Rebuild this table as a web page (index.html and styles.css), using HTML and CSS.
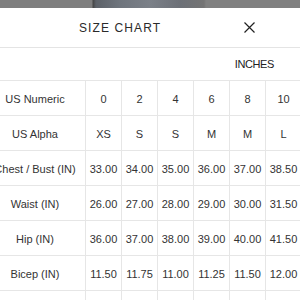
FILE: index.html
```html
<!DOCTYPE html>
<html>
<head>
<meta charset="utf-8">
<link rel="stylesheet" href="styles.css">
</head>
<body>
<div class="photo"></div>
<div class="modal">
  <div class="header">
    <div class="title">SIZE CHART</div>
    <svg class="close" width="11" height="11" viewBox="0 0 11 11"><path d="M0.5 0.5 L10.5 10.5 M10.5 0.5 L0.5 10.5" stroke="#222" stroke-width="1.2" fill="none"/></svg>
  </div>
  <div class="units">INCHES</div>
  <div class="chart">
    <div class="cell label">US Numeric</div><div class="cell">0</div><div class="cell">2</div><div class="cell">4</div><div class="cell">6</div><div class="cell">8</div><div class="cell">10</div>
    <div class="cell label">US Alpha</div><div class="cell">XS</div><div class="cell">S</div><div class="cell">S</div><div class="cell">M</div><div class="cell">M</div><div class="cell">L</div>
    <div class="cell label">Chest / Bust (IN)</div><div class="cell">33.00</div><div class="cell">34.00</div><div class="cell">35.00</div><div class="cell">36.00</div><div class="cell">37.00</div><div class="cell">38.50</div>
    <div class="cell label">Waist (IN)</div><div class="cell">26.00</div><div class="cell">27.00</div><div class="cell">28.00</div><div class="cell">29.00</div><div class="cell">30.00</div><div class="cell">31.50</div>
    <div class="cell label">Hip (IN)</div><div class="cell">36.00</div><div class="cell">37.00</div><div class="cell">38.00</div><div class="cell">39.00</div><div class="cell">40.00</div><div class="cell">41.50</div>
    <div class="cell label">Bicep (IN)</div><div class="cell">11.50</div><div class="cell">11.75</div><div class="cell">11.00</div><div class="cell">11.25</div><div class="cell">11.50</div><div class="cell">12.00</div>
    <div class="cell label">&nbsp;</div><div class="cell"></div><div class="cell"></div><div class="cell"></div><div class="cell"></div><div class="cell"></div><div class="cell"></div>
  </div>
</div>
</body>
</html>
```
FILE: styles.css
```css
html, body {
  margin: 0;
  padding: 0;
  width: 300px;
  height: 300px;
  overflow: hidden;
  background: #fff;
  font-family: "Liberation Sans", Arial, sans-serif;
  color: #333;
}
.photo {
  height: 8px;
  background: linear-gradient(90deg, #7e7e7e 0, #7e7e7e 92px, #454545 93px, #5c6168 96px, #6f757d 120px, #7b8088 150px, #6c7077 180px, #747474 204px, #808080 206px, #808080 100%);
}
.modal {
  background: #fff;
}
.header {
  height: 39px;
  display: flex;
  align-items: center;
  justify-content: space-between;
  padding: 0 45px 0 79px;
  border-bottom: 1px solid #e4e4e4;
}
.title {
  font-size: 12px;
  letter-spacing: 1.1px;
  color: #2a2a2a;
}
.close {
  display: block;
}
.units {
  height: 32px;
  display: flex;
  align-items: center;
  justify-content: flex-end;
  padding-right: 26px;
  font-size: 11px;
  letter-spacing: -0.4px;
  color: #222;
}
.chart {
  display: grid;
  grid-template-columns: 101px repeat(6, 36px);
  grid-auto-rows: 35px;
  margin-left: -15px;
  border-top: 1px solid #e6e6e6;
  width: 317px;
}
.cell {
  display: flex;
  align-items: center;
  justify-content: center;
  border-right: 1px solid #e6e6e6;
  border-bottom: 1px solid #e6e6e6;
  font-size: 11px;
  white-space: nowrap;
  padding-top: 2px;
}
```
